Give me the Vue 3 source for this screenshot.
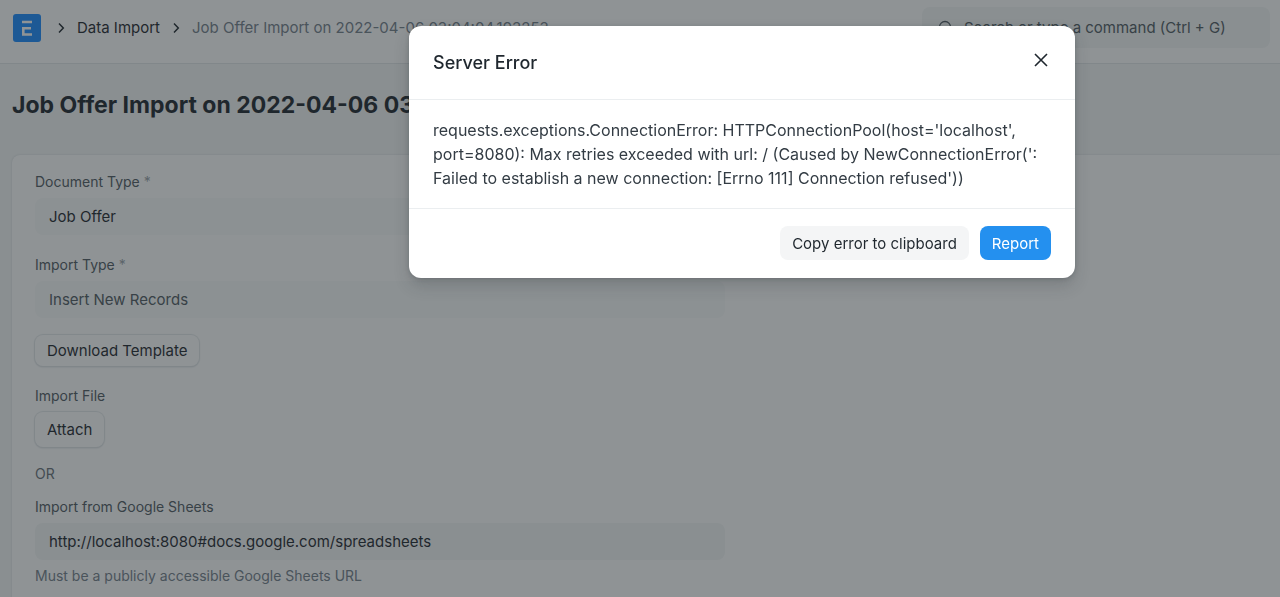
<script setup>
import { ref } from 'vue'

const docName = 'Job Offer Import on 2022-04-06 03:04:04.193253'
const documentType = ref('Job Offer')
const importType = ref('Insert New Records')
const sheetUrl = ref('http://localhost:8080#docs.google.com/spreadsheets')
const open = ref(true)
</script>

<template>
  <div class="desk">
    <header class="navbar">
      <nav class="crumbs" aria-label="Breadcrumb">
        <a class="logo" href="#" aria-label="Home">
          <svg viewBox="0 0 28 28" width="28" height="28" aria-hidden="true">
            <rect width="28" height="28" rx="3" fill="#1b8aff" />
            <path d="M9 8h10M9 14.300h9M10.300 13v7.500M9 20.500h10" fill="none" stroke="#fff" stroke-width="2.600" />
          </svg>
        </a>
        <svg class="chevron" viewBox="0 0 8 12" width="8" height="12" aria-hidden="true"><path d="M2 1.500 6.300 6 2 10.500" /></svg>
        <a class="crumb" href="#">Data Import</a>
        <svg class="chevron second" viewBox="0 0 8 12" width="8" height="12" aria-hidden="true"><path d="M2 1.500 6.300 6 2 10.500" /></svg>
        <a class="crumb current" href="#">{{ docName }}</a>
      </nav>
      <label class="search">
        <svg viewBox="0 0 16 16" width="16" height="16" aria-hidden="true">
          <circle cx="8" cy="7" r="5.500" /><path d="m12 11 4 4" />
        </svg>
        <input type="text" aria-label="Search" placeholder="Search or type a command (Ctrl + G)" />
      </label>
    </header>

    <h1 class="title">{{ docName }}</h1>

    <main class="card">
      <form class="form" @submit.prevent>
        <label class="label" for="doctype">Document Type <span class="star">*</span></label>
        <input id="doctype" v-model="documentType" class="control pale" type="text" />

        <label class="label spaced" for="importtype">Import Type <span class="star">*</span></label>
        <select id="importtype" v-model="importType" class="control pale muted">
          <option>Insert New Records</option>
          <option>Update Existing Records</option>
        </select>

        <button class="btn template" type="button">Download Template</button>

        <label class="label" for="attach">Import File</label>
        <button id="attach" class="btn attach" type="button">Attach</button>

        <p class="or">OR</p>

        <label class="label" for="sheets">Import from Google Sheets</label>
        <input id="sheets" v-model="sheetUrl" class="control" type="text" aria-describedby="hint" />
        <p id="hint" class="hint">Must be a publicly accessible Google Sheets URL</p>
      </form>
    </main>

    <div v-if="open" class="backdrop">
      <section class="modal" role="dialog" aria-modal="true" aria-labelledby="dialog-title">
        <header class="modal-head">
          <h2 id="dialog-title">Server Error</h2>
          <button class="close" type="button" aria-label="Close" @click="open = false">
            <svg viewBox="0 0 14 14" width="14" height="14" aria-hidden="true"><path d="m1 1 12 12M13 1 1 13" /></svg>
          </button>
        </header>
        <p class="message">requests.exceptions.ConnectionError: HTTPConnectionPool(host='localhost', port=8080): Max retries exceeded with url: / (Caused by NewConnectionError(': Failed to establish a new connection: [Errno 111] Connection refused'))</p>
        <footer class="modal-foot">
          <button class="action" type="button">Copy error to clipboard</button>
          <button class="action primary" type="button">Report</button>
        </footer>
      </section>
    </div>
  </div>
</template>

<style>
html, body { height: 100%; overflow: hidden; }
</style>

<style scoped>
.desk, .desk * { box-sizing: border-box; }
.desk {
  height: 100vh;
  overflow: hidden;
  background: #f4f6f6;
  color: #1f272e;
  font-family: Inter, "Liberation Sans", sans-serif;
  font-size: 15px;
}
input, select, button { font: inherit; color: inherit; border: 0; margin: 0; }
a { color: inherit; text-decoration: none; }
p, h1, h2 { margin: 0; }

.navbar {
  display: flex;
  align-items: center;
  justify-content: space-between;
  height: 64px;
  padding: 0 10px 8px 13px;
  background: #fff;
  border-bottom: 1px solid #e2e6e8;
}
.crumbs { display: flex; align-items: center; white-space: nowrap; }
.logo { display: flex; margin-right: 16px; }
.chevron { margin-right: 12px; fill: none; stroke: #1f272e; stroke-width: 1.5; }
.chevron.second { margin-left: 12px; }
.current { color: #74808b; }
.search {
  display: flex;
  align-items: center;
  gap: 11px;
  width: 348px;
  height: 41px;
  padding: 0 15px;
  border-radius: 8px;
  background: #f4f6f6;
}
.search svg { flex: none; fill: none; stroke: #505a62; stroke-width: 1.3; }
.search input { flex: 1; min-width: 0; padding: 0; background: none; }
.search input::placeholder { color: #505a62; opacity: 1; }

.title { padding: 25px 12px 34px; font-size: 23px; line-height: 32px; font-weight: 700; }

.card {
  min-height: 600px;
  margin-left: 12px;
  padding: 15px 23px;
  border-radius: 8px 0 0 0;
  background: #fff;
  box-shadow: 0 0 2px #cdd3d8;
}
.form { display: flex; flex-direction: column; align-items: flex-start; width: 690px; max-width: 100%; }
.label { color: #505a62; font-size: 14px; line-height: 24px; }
.star { color: #98a1a9; }
.spaced { margin-top: 18px; }
.control {
  appearance: none;
  width: 100%;
  height: 37px;
  margin-top: 4px;
  padding: 0 14px;
  border-radius: 8px;
  background: #f4f6f6;
}
.pale { background: #f9fafa; }
.muted { color: #505a62; opacity: 1; }
.btn {
  height: 31px;
  padding: 0 12px;
  border-radius: 8px;
  background: #fff;
  box-shadow: 0 0 1px 1px #e2e6e8, 0 1px 2px #cdd3d8;
}
.template { margin: 17px 0 18px; }
.attach { height: 35px; margin-top: 4px; }
.or { margin: 15px 0 9px; color: #687178; font-size: 14px; line-height: 24px; }
.hint { margin-top: 4px; color: #74808b; font-size: 14px; line-height: 24px; }

/* The dialog lies over the whole desk. */
.backdrop {
  position: fixed;
  inset: 0;
  display: flex;
  align-items: flex-start;
  justify-content: flex-end;
  padding: 26px 205px 26px 26px;
  background: rgba(31, 39, 43, 0.5);
}
.modal {
  width: 666px;
  max-width: 100%;
  border-radius: 12px;
  background: #fff;
  box-shadow: 0 8px 16px rgba(31, 39, 46, 0.18), 0 1px 4px rgba(31, 39, 46, 0.2);
}
.modal-head {
  display: flex;
  align-items: center;
  justify-content: space-between;
  height: 74px;
  padding: 0 24px;
  border-bottom: 1px solid #ebeef0;
}
.modal-head h2 { font-size: 18px; line-height: 28px; font-weight: 500; }
.close { display: flex; padding: 4px 0 4px 4px; margin: 0 3px 5px 0; background: none; }
.close svg { fill: none; stroke: #1f272e; stroke-width: 1.6; }
.message { padding: 18px 24px; color: #333c44; font-size: 16px; line-height: 24px; }
.modal-foot {
  display: flex;
  justify-content: flex-end;
  gap: 11px;
  padding: 17px 24px 18px;
  border-top: 1px solid #ebeef0;
}
.action { height: 34px; padding: 0 12px; border-radius: 8px; background: #f4f5f6; }
.primary { background: #2490ef; color: #fff; }
</style>
